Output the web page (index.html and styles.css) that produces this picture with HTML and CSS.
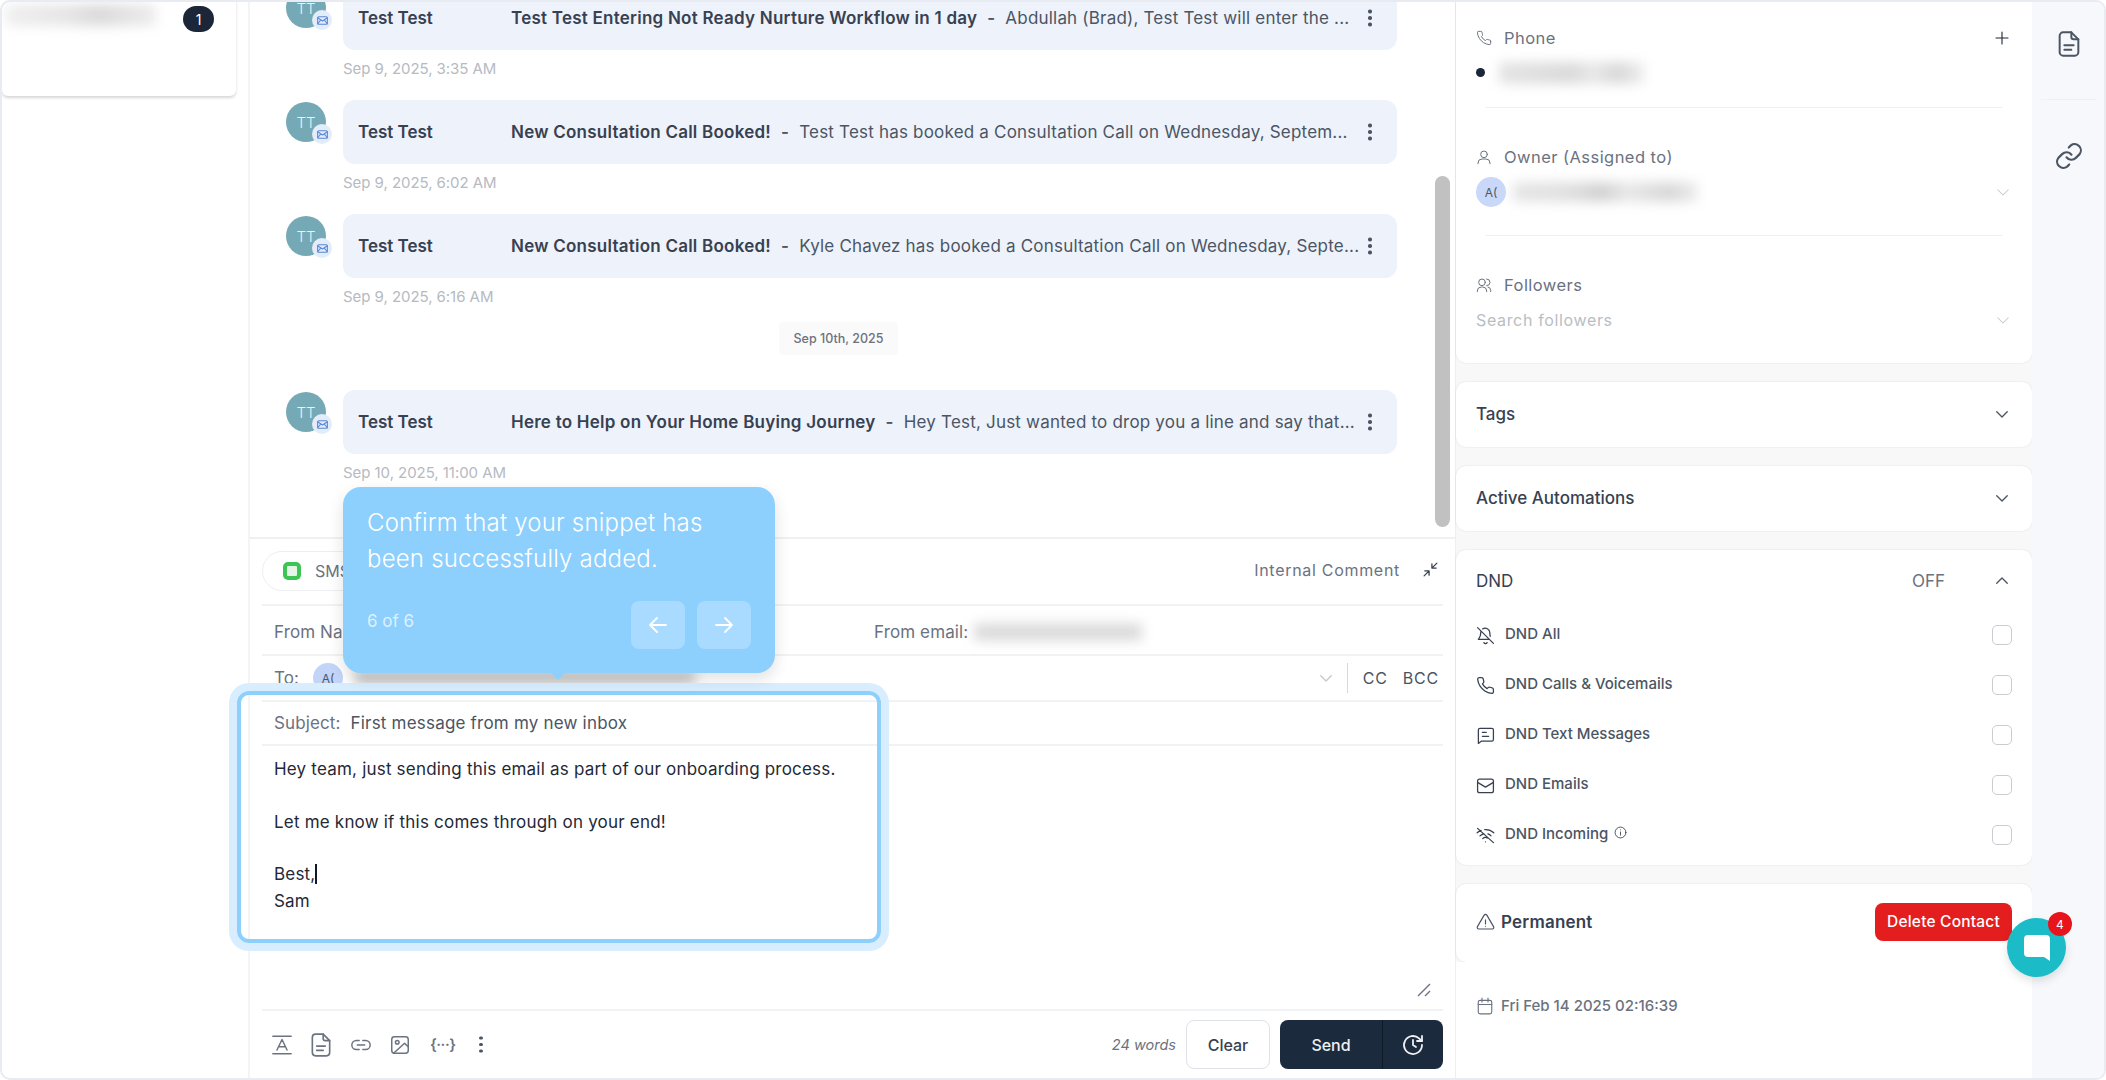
FILE: index.html
```html
<!DOCTYPE html>
<html lang="en">
<head>
<meta charset="utf-8">
<title>Conversation</title>
<link rel="stylesheet" href="styles.css">
</head>
<body>
<svg class="sprite" width="0" height="0" aria-hidden="true">
  <symbol id="i-phone" viewBox="0 0 24 24"><path d="M22 16.92v3a2 2 0 0 1-2.18 2 19.79 19.79 0 0 1-8.63-3.07 19.5 19.5 0 0 1-6-6 19.79 19.79 0 0 1-3.07-8.67A2 2 0 0 1 4.11 2h3a2 2 0 0 1 2 1.72 12.84 12.84 0 0 0 .7 2.81 2 2 0 0 1-.45 2.11L8.09 9.91a16 16 0 0 0 6 6l1.27-1.27a2 2 0 0 1 2.11-.45 12.84 12.84 0 0 0 2.81.7A2 2 0 0 1 22 16.92z"/></symbol>
  <symbol id="i-user" viewBox="0 0 24 24"><circle cx="12" cy="8" r="5"/><path d="M3 22v-1a6 6 0 0 1 6-6h6a6 6 0 0 1 6 6v1"/></symbol>
  <symbol id="i-users" viewBox="0 0 24 24"><circle cx="9" cy="8" r="5"/><path d="M2 22v-1a6 6 0 0 1 6-6h2a6 6 0 0 1 6 6v1M16 3a5 5 0 0 1 0 10M18 15a5 5 0 0 1 4 5v2"/></symbol>
  <symbol id="i-down" viewBox="0 0 24 24"><path d="M5 9l7 7 7-7"/></symbol>
  <symbol id="i-up" viewBox="0 0 24 24"><path d="M5 15l7-7 7 7"/></symbol>
  <symbol id="i-plus" viewBox="0 0 24 24"><path d="M12 4v16M4 12h16"/></symbol>
  <symbol id="i-doc" viewBox="0 0 24 24"><path d="M14 2H7a3 3 0 0 0-3 3v14a3 3 0 0 0 3 3h10a3 3 0 0 0 3-3V8z"/><path d="M14 2v4a2 2 0 0 0 2 2h4M8 13h8M8 17h6"/></symbol>
  <symbol id="i-link" viewBox="0 0 24 24"><path d="M10 13a5 5 0 0 0 7.5.5l3-3a5 5 0 0 0-7-7l-1.7 1.7"/><path d="M14 11a5 5 0 0 0-7.5-.5l-3 3a5 5 0 0 0 7 7l1.7-1.7"/></symbol>
  <symbol id="i-bell-off" viewBox="0 0 24 24"><path d="M10 21a2.2 2.2 0 0 0 4 0M6.3 6.500A6 6 0 0 0 6 8.500c0 5-2 7-3 8.500h14M18 13c-.4-1.300-.5-2.800-.5-4.500A6 6 0 0 0 8.500 3.600M2 2l20 20"/></symbol>
  <symbol id="i-chat" viewBox="0 0 24 24"><path d="M3 5a2 2 0 0 1 2-2h15a2 2 0 0 1 2 2v12a2 2 0 0 1-2 2H7l-4 3z"/><path d="M8 8h5M8 13h8"/></symbol>
  <symbol id="i-mail" viewBox="0 0 24 24"><rect x="2" y="4" width="20" height="17" rx="2.500"/><path d="M2 8l10 6 10-6"/></symbol>
  <symbol id="i-wifi-off" viewBox="0 0 24 24"><path d="M2 3l20 18M1.500 8.500a15 15 0 0 1 5-3M11 4.500a15 15 0 0 1 11.500 4M5 12.500a10 10 0 0 1 5-2.700M15 10a10 10 0 0 1 4 2.500M8.500 16a5 5 0 0 1 6-.8M12 20h.01"/></symbol>
  <symbol id="i-info" viewBox="0 0 24 24"><circle cx="12" cy="12" r="10"/><path d="M12 11v6M12 7h.01"/></symbol>
  <symbol id="i-warn" viewBox="0 0 24 24"><path d="M10.300 3.900L1.800 18.500A2 2 0 0 0 3.500 21.500h17a2 2 0 0 0 1.700-3L13.700 3.900a2 2 0 0 0-3.400 0z"/><path d="M12 10v5M12 18h.01"/></symbol>
  <symbol id="i-cal" viewBox="0 0 24 24"><rect x="3" y="4.500" width="18" height="18" rx="2.500"/><path d="M8 1.500v5M16 1.500v5M3 10h18"/></symbol>
  <symbol id="i-left" viewBox="0 0 24 24"><path d="M20 12H4M11 5l-7 7 7 7"/></symbol>
  <symbol id="i-right" viewBox="0 0 24 24"><path d="M4 12h16M13 5l7 7-7 7"/></symbol>
  <symbol id="i-min" viewBox="0 0 24 24"><path d="M3 21l7-7M4 14h6v6M21 3l-7 7M20 10h-6V4"/></symbol>
  <symbol id="i-sched" viewBox="0 0 24 24"><path d="M21 12a9 9 0 1 1-3-6.700L21 8"/><path d="M21 3v5h-5M12 7v5l3 2"/></symbol>
  <symbol id="i-font" viewBox="0 0 24 24"><path d="M2 2.500h20M2 21.500h20M6.500 17.500L12 6l5.500 11.500M8.500 14h7"/></symbol>
  <symbol id="i-image" viewBox="0 0 24 24"><rect x="3" y="3" width="18" height="18" rx="3"/><circle cx="9" cy="9" r="2"/><path d="M21 14l-4-4L5 21"/></symbol>
  <symbol id="i-chain" viewBox="0 0 24 24"><path d="M10 7H7a5 5 0 0 0 0 10h3M14 7h3a5 5 0 0 1 0 10h-3M8 12h8"/></symbol>
  <symbol id="i-env" viewBox="0 0 24 24"><rect x="3" y="5" width="18" height="14" rx="2.500"/><path d="M3 7l9 6 9-6M3 18l6-7M21 18l-6-7"/></symbol>
</svg>

<div class="app">
  <aside class="left">
    <div class="left-card">
      <div class="blur blur-name"></div>
      <span class="count">1</span>
    </div>
  </aside>

  <main class="center">
    <section class="thread">
      <div class="scrollbar"></div>
      <article class="msg msg-first">
        <div class="avatar">TT<span class="chan"><svg class="ic"><use href="#i-env"/></svg></span></div>
        <div class="msg-body">
          <div class="bubble"><span class="who">Test Test</span><span class="line"><b>Test Test Entering Not Ready Nurture Workflow in 1 day</b><i>-</i>Abdullah (Brad), Test Test will enter the ...</span><span class="kebab"></span></div>
          <time class="stamp">Sep 9, 2025, 3:35 AM</time>
        </div>
      </article>
      <article class="msg">
        <div class="avatar">TT<span class="chan"><svg class="ic"><use href="#i-env"/></svg></span></div>
        <div class="msg-body">
          <div class="bubble"><span class="who">Test Test</span><span class="line"><b>New Consultation Call Booked!</b><i>-</i>Test Test has booked a Consultation Call on Wednesday, Septem...</span><span class="kebab"></span></div>
          <time class="stamp">Sep 9, 2025, 6:02 AM</time>
        </div>
      </article>
      <article class="msg">
        <div class="avatar">TT<span class="chan"><svg class="ic"><use href="#i-env"/></svg></span></div>
        <div class="msg-body">
          <div class="bubble"><span class="who">Test Test</span><span class="line"><b>New Consultation Call Booked!</b><i>-</i>Kyle Chavez has booked a Consultation Call on Wednesday, Septe...</span><span class="kebab"></span></div>
          <time class="stamp">Sep 9, 2025, 6:16 AM</time>
        </div>
      </article>
      <div class="day">Sep 10th, 2025</div>
      <article class="msg">
        <div class="avatar">TT<span class="chan"><svg class="ic"><use href="#i-env"/></svg></span></div>
        <div class="msg-body">
          <div class="bubble"><span class="who">Test Test</span><span class="line"><b>Here to Help on Your Home Buying Journey</b><i>-</i>Hey Test, Just wanted to drop you a line and say that...</span><span class="kebab"></span></div>
          <time class="stamp">Sep 10, 2025, 11:00 AM</time>
        </div>
      </article>
    </section>

    <section class="composer">
      <div class="c-row c-tabs">
        <div class="sms"><span class="sms-ic"></span>SMS</div>
        <div class="c-tabs-right"><span class="internal">Internal Comment</span><svg class="ic ic-min"><use href="#i-min"/></svg></div>
      </div>
      <div class="c-row c-from">
        <span class="c-label c-name">From Name:</span>
        <span class="c-label">From email:</span>
        <div class="blur blur-email"></div>
      </div>
      <div class="c-row c-to">
        <span class="c-label">To:</span>
        <span class="mini-av">A(</span>
        <div class="blur blur-to"></div>
        <svg class="ic ic-chev"><use href="#i-down"/></svg>
        <span class="c-sep"></span>
        <span class="cc">CC</span>
        <span class="cc">BCC</span>
      </div>
      <div class="c-row c-subject"><span class="c-label">Subject:</span><span class="subject-text">First message from my new inbox</span></div>
      <div class="c-body">
        <p>Hey team, just sending this email as part of our onboarding process.</p>
        <p class="gap">Let me know if this comes through on your end!</p>
        <p class="gap">Best,<span class="caret"></span><br>Sam</p>
        <svg class="resize" viewBox="0 0 14 14"><path d="M1 13L13 1M8 13l5-5"/></svg>
      </div>
      <div class="c-tools">
        <svg class="ic t-ic"><use href="#i-font"/></svg>
        <svg class="ic t-ic t-doc"><use href="#i-doc"/></svg>
        <svg class="ic t-ic"><use href="#i-chain"/></svg>
        <svg class="ic t-ic t-img"><use href="#i-image"/></svg>
        <span class="t-var">{&middot;&middot;&middot;}</span>
        <span class="kebab t-kebab"></span>
        <span class="words">24 words</span>
        <button class="btn-clear">Clear</button>
        <div class="btn-send"><span class="send-l">Send</span><span class="send-r"><svg class="ic"><use href="#i-sched"/></svg></span></div>
      </div>
    </section>
  </main>

  <aside class="panel">
    <div class="cards">
      <section class="card card-contact">
        <div class="f-label"><svg class="ic"><use href="#i-phone"/></svg>Phone<svg class="ic ic-plus"><use href="#i-plus"/></svg></div>
        <div class="phone-row"><span class="dot"></span><div class="blur blur-phone"></div></div>
        <div class="rule rule-phone"></div>
        <div class="f-label f-next"><svg class="ic"><use href="#i-user"/></svg>Owner (Assigned to)</div>
        <div class="owner-row"><span class="owner-av">A(</span><div class="blur blur-owner"></div><svg class="ic ic-chev"><use href="#i-down"/></svg></div>
        <div class="rule rule-owner"></div>
        <div class="f-label f-next"><svg class="ic"><use href="#i-users"/></svg>Followers</div>
        <div class="search-row"><span>Search followers</span><svg class="ic ic-chev"><use href="#i-down"/></svg></div>
      </section>
      <section class="card card-bar"><span>Tags</span><svg class="ic"><use href="#i-down"/></svg></section>
      <section class="card card-bar"><span>Active Automations</span><svg class="ic"><use href="#i-down"/></svg></section>
      <section class="card card-dnd">
        <div class="dnd-head"><span class="dnd-title">DND</span><span class="off">OFF</span><svg class="ic"><use href="#i-up"/></svg></div>
        <div class="dnd-row"><svg class="ic"><use href="#i-bell-off"/></svg><span>DND All</span><em class="box"></em></div>
        <div class="dnd-row"><svg class="ic"><use href="#i-phone"/></svg><span>DND Calls &amp; Voicemails</span><em class="box"></em></div>
        <div class="dnd-row"><svg class="ic"><use href="#i-chat"/></svg><span>DND Text Messages</span><em class="box"></em></div>
        <div class="dnd-row"><svg class="ic"><use href="#i-mail"/></svg><span>DND Emails</span><em class="box"></em></div>
        <div class="dnd-row"><svg class="ic"><use href="#i-wifi-off"/></svg><span>DND Incoming</span><svg class="ic ic-info"><use href="#i-info"/></svg><em class="box"></em></div>
      </section>
      <section class="card card-perm">
        <svg class="ic"><use href="#i-warn"/></svg><span>Permanent</span>
        <button class="btn-del">Delete Contact</button>
      </section>
    </div>
    <footer class="created"><svg class="ic"><use href="#i-cal"/></svg>Fri Feb 14 2025 02:16:39</footer>
  </aside>

  <nav class="rail">
    <div class="rail-top"><svg class="ic"><use href="#i-doc"/></svg></div>
    <div class="rail-link"><svg class="ic"><use href="#i-link"/></svg></div>
  </nav>
</div>

<div class="halo"></div>
<div class="tip">
  <p class="tip-text">Confirm that your snippet has been successfully added.</p>
  <div class="tip-foot">
    <span class="tip-count">6 of 6</span>
    <span class="tip-btn"><svg class="ic"><use href="#i-left"/></svg></span>
    <span class="tip-btn"><svg class="ic"><use href="#i-right"/></svg></span>
  </div>
</div>
<div class="chat-fab">
  <svg class="fab-ic" viewBox="0 0 28 28"><path d="M5 1h18a4 4 0 0 1 4 4v22l-6-4H5a4 4 0 0 1-4-4V5a4 4 0 0 1 4-4z"/></svg>
  <span class="fab-badge">4</span>
</div>
</body>
</html>
```

FILE: styles.css
```css
* { box-sizing: border-box; }
html, body { margin: 0; padding: 0; height: 100%; background: #fff; overflow: hidden; }
body { font-family: Inter, "Noto Sans", sans-serif; color: #374151; position: relative; }
.sprite { position: absolute; }
.ic { width: 18px; height: 18px; fill: none; stroke: currentColor; stroke-width: 1.8; stroke-linecap: round; stroke-linejoin: round; flex: none; }
p { margin: 0; }
button { font: inherit; cursor: pointer; }

.blur { background: #d4d4d4; filter: blur(6px); flex: none; }

.app { width: 2106px; height: 1080px; display: flex; border: 2px solid #e8ebf1; border-radius: 10px; overflow: hidden; background: #fff; }

/* left */
.left { width: 246px; flex: none; }
.left-card { width: 234px; height: 96px; margin-top: -2px; border-radius: 0 0 6px 6px; box-shadow: 0 2px 3px rgba(0,0,0,.16); display: flex; align-items: flex-start; padding-top: 2px; position: relative; }
.blur-name { width: 150px; height: 22px; margin: 2px 0 0 4px; background: linear-gradient(90deg, #efefef, #e6e6e6 40%, #dadada 62%, #ededed); }
.count { margin: 4px 0 0 27px; width: 31px; height: 26px; border-radius: 13px; background: #1b2638; color: #fff; font-size: 14px; display: flex; align-items: center; justify-content: center; }

/* center */
.center { width: 1207px; flex: none; border-left: 2px solid #f3f4f6; display: flex; flex-direction: column; }
.thread { height: 535px; overflow: hidden; padding-left: 36px; position: relative; flex: none; }
.scrollbar { position: absolute; left: 1185px; top: 174px; width: 15px; height: 351px; border-radius: 8px; background: #c1c1c1; }
.msg { display: flex; gap: 17px; }
.msg + .msg { margin-top: 21px; }
.msg-first { margin-top: -16px; }
.avatar { width: 40px; height: 40px; margin-top: 2px; border-radius: 50%; background: #76a9b6; color: #e8f3f5; font-size: 15px; font-weight: 300; display: flex; align-items: center; justify-content: center; position: relative; flex: none; }
.chan { position: absolute; right: -6px; bottom: -2px; width: 20px; height: 20px; border-radius: 50%; background: #e3ecf9; display: flex; align-items: center; justify-content: center; color: #5c86d6; }
.chan .ic { width: 13px; height: 13px; stroke-width: 2; }
.msg-body { width: 1054px; }
.bubble { height: 64px; border-radius: 12px; background: #eef2fb; display: flex; align-items: center; padding: 0 0 1px 15px; font-size: 17px; position: relative; }
.who { width: 153px; flex: none; font-weight: 600; color: #374151; }
.line { white-space: nowrap; color: #4b5563; letter-spacing: .2px; }
.line b { font-weight: 600; color: #374151; letter-spacing: .24px; }
.line i { font-style: normal; font-weight: 600; margin: 0 10px; }
.kebab { position: absolute; left: 1025px; top: 50%; width: 3.500px; height: 3.500px; margin-top: -2px; border-radius: 50%; background: #4b5563; box-shadow: 0 -6.500px 0 #4b5563, 0 6.500px 0 #4b5563; }
.stamp { display: block; height: 20px; line-height: 20px; margin-top: 9px; font-size: 15px; letter-spacing: -.05px; color: #b6bac1; }
.day { width: 119px; height: 33px; margin: 15px 0 35px 493px; border-radius: 4px; background: #fafafa; color: #6b7280; font-size: 12.500px; font-weight: 500; display: flex; align-items: center; justify-content: center; }

/* composer */
.composer { flex: 1; border-top: 2px solid #eef0f2; display: flex; flex-direction: column; padding: 0 12px; min-height: 0; }
.c-row { display: flex; align-items: center; border-bottom: 2px solid #f1f2f4; flex: none; font-size: 17px; }
.c-label { color: #6b7280; letter-spacing: .12px; }
.c-tabs { height: 67px; justify-content: space-between; font-size: 16px; }
.sms { height: 40px; width: 150px; border: 1px solid #eceef1; border-radius: 20px; padding-left: 20px; display: flex; align-items: center; gap: 14px; color: #6b7280; margin-top: -1px; }
.sms-ic { width: 18px; height: 18px; border-radius: 5px; background: #e4f7e6; border: 4px solid #3cc454; }
.c-tabs-right { display: flex; align-items: center; gap: 22px; padding: 0 4px 4px 0; }
.internal { color: #6b7280; letter-spacing: .7px; }
.ic-min { color: #374151; width: 17px; height: 17px; }
.c-from { height: 50px; padding: 4px 0 0 12px; }
.c-name { width: 600px; }
.blur-email { width: 168px; height: 18px; margin-left: 6px; background: #dcdcdc; }
.c-to { height: 46px; padding-left: 12px; position: relative; }
.mini-av { width: 30px; height: 30px; margin-left: 14px; border-radius: 50%; background: #c2d4f7; color: #4b5563; font-size: 12px; display: flex; align-items: center; justify-content: center; flex: none; }
.blur-to { width: 340px; height: 14px; margin-left: 12px; background: #c9c9c9; }
.ic-chev { color: #c4c8ce; }
.c-to .ic-chev { margin-left: auto; margin-right: 12px; }
.c-sep { width: 1px; height: 30px; background: #d5d8dc; margin-right: 15px; }
.cc { color: #4b5563; margin-right: 15px; font-size: 16px; letter-spacing: .8px; }
.cc:last-child { margin-right: 4px; }
.c-subject { height: 44px; padding-left: 12px; gap: 10px; }
.subject-text { color: #4b5563; letter-spacing: .2px; }
.c-body { flex: 1; padding: 10px 12px 0; font-size: 17px; letter-spacing: .2px; line-height: 26.500px; color: #1f2937; position: relative; display: flex; flex-direction: column; }
.gap { margin-top: 26px; }
.caret { display: inline-block; width: 2px; height: 20px; background: #111827; vertical-align: -4px; }
.resize { width: 14px; height: 14px; fill: none; stroke: #6b7280; stroke-width: 1.400; position: absolute; right: 12px; bottom: 12px; }
.c-tools { height: 69px; border-top: 2px solid #f1f2f4; display: flex; align-items: center; gap: 16px; padding: 0 0 0 9px; flex: none; color: #6b7280; }
.t-ic { width: 22px; height: 22px; color: #6b7280; stroke-width: 1.600; }
.t-doc { width: 26px; height: 26px; margin-left: -1px; stroke-width: 1.500; }
.t-img { margin-left: 1px; }
.t-var { width: 22px; margin-left: 3px; font-size: 15px; font-weight: 600; letter-spacing: -.5px; color: #6b7280; white-space: nowrap; }
.kebab.t-kebab { position: static; margin: 0 0 0 11px; flex: none; }
.words { margin-left: auto; font-size: 14.500px; font-style: italic; color: #6b7280; margin-right: -6px; }
.btn-clear { width: 84px; height: 49px; background: #fff; border: 1px solid #dfe2e6; border-radius: 8px; color: #374151; font-size: 16px; font-weight: 500; margin-right: -6px; }
.btn-send { width: 163px; height: 49px; border-radius: 8px; background: #1b2a3d; color: #eef0f3; display: flex; font-size: 16px; font-weight: 500; }
.send-l { width: 103px; display: flex; align-items: center; justify-content: center; border-right: 1px solid #0f1a28; }
.send-r { flex: 1; display: flex; align-items: center; justify-content: center; }
.send-r .ic { width: 24px; height: 24px; }

/* panel */
.panel { width: 577px; flex: none; border-left: 1px solid #eceef1; display: flex; flex-direction: column; }
.cards { background: #f8f8f9; display: flex; flex-direction: column; gap: 19px; flex: none; }
.card { background: #fff; border-radius: 10px; box-shadow: 0 0 2px rgba(0,0,0,.12); padding: 0 20px; }
.card-contact { height: 361px; border-radius: 0 0 10px 10px; padding-top: 24px; }
.f-label { display: flex; align-items: center; height: 24px; gap: 12px; font-size: 16.500px; color: #6b7280; letter-spacing: .45px; }
.f-label .ic { width: 16px; height: 16px; stroke-width: 1.500; }
.ic-plus.ic { margin-left: auto; margin-right: 1px; width: 18px; height: 18px; color: #1f2937; }
.f-next { margin-top: 37px; }
.phone-row { height: 25px; margin-top: 10px; display: flex; align-items: center; gap: 14px; }
.dot { width: 9px; height: 9px; border-radius: 50%; background: #1b2638; }
.blur-phone { width: 145px; height: 22px; background: linear-gradient(90deg, #e4e4e4, #dadada 50%, #e8e8e8 65%, #d8d8d8 82%, #eee); }
.rule { height: 1px; background: #eeeff1; margin: 0 10px; }
.rule-phone { margin-top: 22px; }
.rule-owner { margin-top: 28px; }
.owner-row { height: 30px; margin-top: 8px; display: flex; align-items: center; gap: 7px; }
.owner-av { width: 30px; height: 30px; border-radius: 50%; background: #c9d8f8; color: #4b5563; font-size: 12px; display: flex; align-items: center; justify-content: center; flex: none; }
.blur-owner { width: 185px; height: 20px; background: linear-gradient(90deg, #e6e6e6, #e0e0e0 30%, #d2d2d2 48%, #e8e8e8 62%, #d8d8d8 85%, #eee); }
.owner-row .ic-chev, .search-row .ic-chev { margin-left: auto; width: 18px; height: 18px; stroke-width: 1.400; }
.search-row { height: 24px; margin-top: 11px; display: flex; align-items: center; font-size: 16px; color: #b9bdc4; letter-spacing: .65px; }
.card-bar { height: 65px; display: flex; align-items: center; justify-content: space-between; font-size: 17px; font-weight: 500; color: #374151; padding-bottom: 2px; }
.card-bar .ic { width: 18px; height: 18px; margin-right: 1px; color: #4b5563; }
.card-dnd { height: 315px; padding-top: 19px; }
.dnd-head { height: 24px; display: flex; align-items: center; font-size: 17px; }
.dnd-title { flex: 1; font-weight: 400; }
.off { color: #6b7280; margin-right: 48px; }
.dnd-head .ic { width: 18px; height: 18px; margin-right: 1px; color: #4b5563; }
.dnd-row { height: 50px; display: flex; align-items: center; gap: 10px; font-size: 15px; font-weight: 500; color: #4b5563; }
.dnd-head + .dnd-row { margin-top: 17px; }
.dnd-row span { padding-bottom: 3px; }
.dnd-row > .ic { width: 19px; height: 19px; stroke-width: 1.600; color: #374151; }
.dnd-row > .ic-info { width: 13px; height: 13px; margin: -6px 0 0 -4px; }
.box { width: 20px; height: 20px; margin-left: auto; border: 1.500px solid #c9ccd1; border-radius: 5px; }
.card-perm { height: 78px; display: flex; align-items: center; gap: 6px; font-size: 17px; letter-spacing: .2px; font-weight: 600; color: #374151; padding-bottom: 3px; }
.card-perm .ic { width: 19px; height: 19px; stroke-width: 1.500; color: #4b5563; }
.btn-del { margin-left: auto; width: 137px; height: 38px; border: 0; border-radius: 8px; background: #e41e1e; color: #fff; font-size: 15.500px; font-weight: 500; letter-spacing: .2px; }
.created { flex: 1; background: #fff; padding: 35px 20px 0; display: flex; align-items: flex-start; gap: 7px; font-size: 15px; font-weight: 500; color: #6b7280; line-height: 18px; }
.created .ic { width: 18px; height: 18px; stroke-width: 1.500; }

/* rail */
.rail { flex: 1; background: #f6f8fb; display: flex; flex-direction: column; align-items: center; color: #4b5563; padding-left: 2px; }
.rail-top { width: 56px; height: 98px; padding-top: 28px; border-bottom: 1px solid #eef0f3; display: flex; justify-content: center; }
.rail-top .ic { width: 28px; height: 28px; stroke-width: 1.700; }
.rail-link { margin-top: 41px; }
.rail-link .ic { width: 30px; height: 30px; stroke-width: 1.700; }

/* overlays */
.halo { position: absolute; left: 237px; top: 691px; width: 644px; height: 252px; border: 4px solid #8dcffd; border-radius: 12px; box-shadow: 0 0 0 8px #d8eeff; }
.tip { position: absolute; left: 343px; top: 487px; width: 432px; height: 186px; border-radius: 18px; background: #8dcffd; color: #fff; padding: 18px 24px 0; box-shadow: 0 6px 16px rgba(0,0,0,.12); }
.tip::after { content: ""; position: absolute; left: 207px; bottom: -7px; border: 8px solid transparent; border-bottom: 0; border-top: 8px solid #8dcffd; }
.tip-text { font-size: 24px; line-height: 36px; font-weight: 300; letter-spacing: .2px; }
.tip-foot { display: flex; align-items: center; gap: 8px; margin-top: 24px; }
.tip-count { flex: 1; font-size: 17px; color: #dff1ff; margin-top: -8px; }
.tip-btn { width: 54px; height: 48px; border-radius: 8px; background: #a8dbff; display: flex; align-items: center; justify-content: center; margin-left: 4px; }
.tip-btn .ic { width: 24px; height: 24px; stroke-width: 1.800; }
.chat-fab { position: absolute; left: 2007px; top: 918px; width: 59px; height: 59px; border-radius: 50%; background: #1bbcc8; box-shadow: 0 4px 10px rgba(0,0,0,.12); display: flex; align-items: center; justify-content: center; }
.fab-ic { width: 28px; height: 28px; fill: #fff; }
.fab-badge { position: absolute; left: 41px; top: -6px; width: 24px; height: 24px; border-radius: 50%; background: #e8141c; color: #fff; font-size: 12px; display: flex; align-items: center; justify-content: center; }
```
